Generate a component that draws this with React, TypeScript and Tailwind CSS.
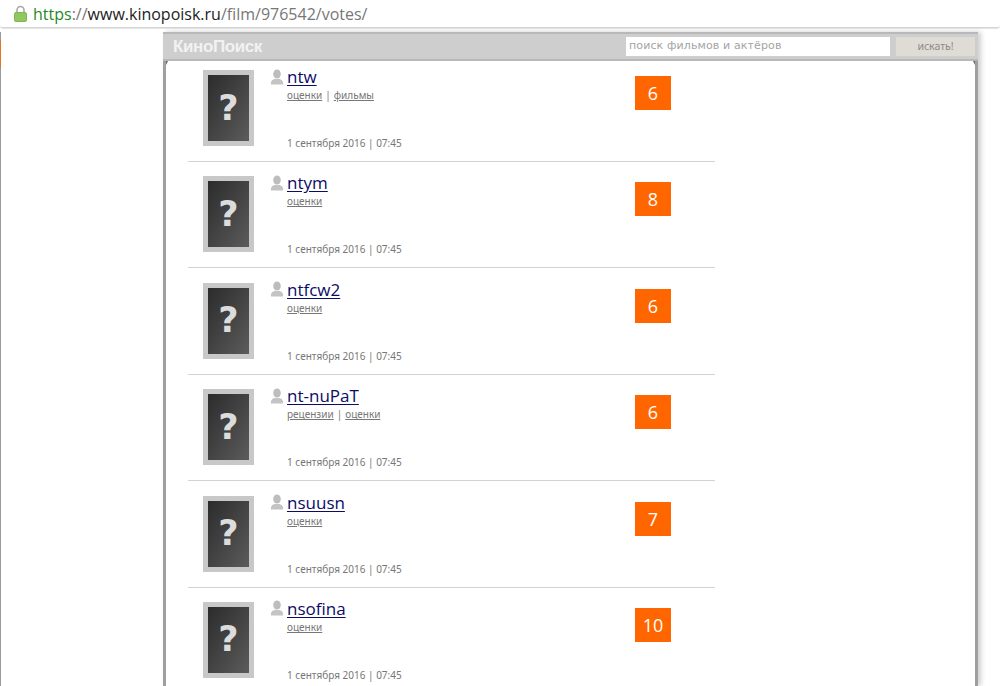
const rows = [
  { name: "ntw", links: ["оценки", "фильмы"], vote: 6 },
  { name: "ntym", links: ["оценки"], vote: 8 },
  { name: "ntfcw2", links: ["оценки"], vote: 6 },
  { name: "nt-nuPaT", links: ["рецензии", "оценки"], vote: 6 },
  { name: "nsuusn", links: ["оценки"], vote: 7 },
  { name: "nsofina", links: ["оценки"], vote: 10 },
];

function Lock() {
  return (
    <svg width="13" height="17" viewBox="0 0 13 17" className="shrink-0">
      <path d="M3 8V5a3.5 3.5 0 0 1 7 0v3" fill="none" stroke="#a8a8a8" strokeWidth="1.6" />
      <rect x="0.5" y="7.5" width="12" height="9" rx="1.5" fill="#8fc860" stroke="#7fb552" />
    </svg>
  );
}

function UserIcon() {
  return (
    <svg width="14" height="16" viewBox="0 0 14 16" className="shrink-0">
      <ellipse cx="7" cy="5" rx="3.8" ry="4.6" fill="#bdbdbd" />
      <path d="M1 15.5c-.6-3.5 1.4-5 3.6-5.6h4.8c2.2.6 4.2 2.1 3.6 5.6z" fill="#c4c4c4" />
    </svg>
  );
}

function Notch({ className }: { className: string }) {
  return (
    <svg width="5" height="5" viewBox="0 0 5 5" className={className}>
      <path d="M0 0H5L2.5 5Z" fill="#666666" />
    </svg>
  );
}

function Row({ r, last }: { r: (typeof rows)[number]; last: boolean }) {
  return (
    <div className={`mb-[14.4px] flex h-[92px] w-[527px] shrink-0 pl-[15px] ${last ? "" : "border-b border-[#d2d2d2]"}`}>
      <div className="flex h-[76px] w-[51px] shrink-0 items-center justify-center border-[5px] border-[#c8c8c8] bg-gradient-to-br from-[#2c2c2c] to-[#5c5c5c]">
        <span className="font-['DejaVu_Sans',sans-serif] text-[35px] font-bold leading-none text-[#dcdcdc]">?</span>
      </div>
      <div className="ml-[16px] flex w-[365px] shrink-0 flex-col">
        <div className="-mt-[4px] flex h-[21px] items-center">
          <UserIcon />
          <span className="ml-[3px] font-['Open_Sans',sans-serif] text-[17px] leading-[21px] text-[#0b0b66] underline underline-offset-2">
            {r.name}
          </span>
        </div>
        <div className="ml-[17px] mt-[1px] font-['Noto_Sans',sans-serif] text-[10px] leading-[14px] text-[#777777]">
          {r.links.map((l, i) => (
            <span key={l}>
              {i > 0 && <span className="px-[3px]">|</span>}
              <span className="underline">{l}</span>
            </span>
          ))}
        </div>
        <div className="ml-[17px] mt-[34px] font-['Noto_Sans',sans-serif] text-[10px] leading-[14px] text-[#777777]">
          1 сентября 2016 | 07:45
        </div>
      </div>
      <div className="mt-[6px] flex h-[34px] w-[36px] shrink-0 items-center justify-center bg-[#ff6600] font-['Open_Sans',sans-serif] text-[18px] leading-none text-white">
        {r.vote}
      </div>
    </div>
  );
}

export default function App() {
  return (
    <div className="flex h-[686px] w-[1000px] flex-col overflow-hidden bg-white">
      <div className="flex h-[28px] shrink-0 items-center rounded-b-[3px] border-b border-[#d4d4d4] pl-[14px] shadow-[0_1px_1px_#e4e4e4]">
        <Lock />
        <div className="ml-[6px] whitespace-nowrap font-['Open_Sans',sans-serif] text-[16px] leading-none">
          <span className="text-[#1d8a1d]">https</span>
          <span className="text-[#777777]">://</span>
          <span className="text-[#222222]">www.kinopoisk.ru</span>
          <span className="text-[#777777]">/film/976542/votes/</span>
        </div>
      </div>
      <div className="flex min-h-0 flex-1">
        <div className="mt-[4px] flex h-full w-[1px] shrink-0 flex-col bg-[#9a9a9a]">
          <div className="mt-[8px] h-[28px] w-[1px] bg-[#e0752c]" />
        </div>
        <div className="ml-[162px] mt-[4px] flex w-[815px] shrink-0 flex-col shadow-[3px_0_5px_#cfcfcf]">
          <div className="flex h-[29px] shrink-0 items-center border-y-2 border-[#b8b8b8] bg-[#cecece] pl-[10px] pr-[2px]">
            <span className="w-[453px] shrink-0 font-['Liberation_Sans',sans-serif] text-[17px] font-bold tracking-[-0.4px] text-[#f2f2f2]">
              КиноПоиск
            </span>
            <div className="flex h-[19px] w-[264px] shrink-0 items-center bg-white pl-[3px] font-['DejaVu_Sans',sans-serif] text-[11px] tracking-[0.12px] text-[#a3a3a3]">
              поиск фильмов и актёров
            </div>
            <div className="ml-[6px] flex h-[19px] w-[79px] shrink-0 items-center justify-center bg-[#dfdcd5] font-['Noto_Sans',sans-serif] text-[10.5px] text-[#8a8a8a]">
              искать!
            </div>
          </div>
          <div className="relative flex min-h-0 flex-1 flex-col overflow-hidden border-x-[3px] border-x-[#9f9f9f] bg-white pl-[22px] pt-[9px]">
            <Notch className="absolute -left-[3px] top-0" />
            <Notch className="absolute -right-[3px] top-0" />
            {rows.map((r, i) => (
              <Row key={r.name} r={r} last={i === rows.length - 1} />
            ))}
          </div>
        </div>
      </div>
    </div>
  );
}
